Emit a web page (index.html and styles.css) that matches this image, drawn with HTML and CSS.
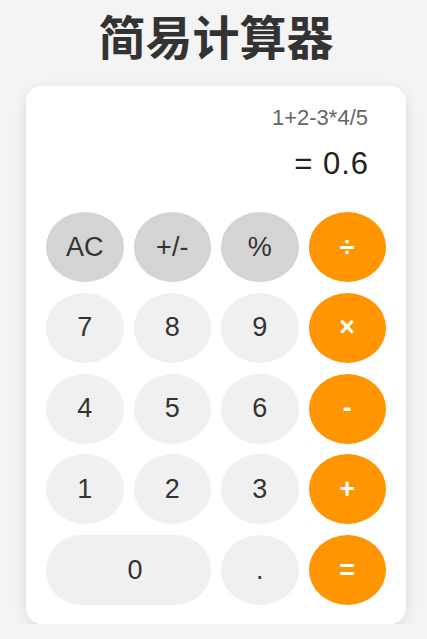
FILE: index.html
```html
<!DOCTYPE html>
<html lang="zh">
<head>
<meta charset="utf-8">
<title>简易计算器</title>
<link rel="stylesheet" href="styles.css">
</head>
<body>
<main class="app">
  <h1 class="title">简易计算器</h1>
  <section class="calc">
    <div class="display">
      <div class="expr">1+2-3*4/5</div>
      <div class="result">= 0.6</div>
    </div>
    <div class="keys">
      <button class="key fn">AC</button>
      <button class="key fn">+/-</button>
      <button class="key fn">%</button>
      <button class="key op">÷</button>
      <button class="key">7</button>
      <button class="key">8</button>
      <button class="key">9</button>
      <button class="key op">×</button>
      <button class="key">4</button>
      <button class="key">5</button>
      <button class="key">6</button>
      <button class="key op">-</button>
      <button class="key">1</button>
      <button class="key">2</button>
      <button class="key">3</button>
      <button class="key op">+</button>
      <button class="key zero">0</button>
      <button class="key">.</button>
      <button class="key op">=</button>
    </div>
  </section>
</main>
</body>
</html>
```

FILE: styles.css
```css
html, body {
  margin: 0;
  padding: 0;
}
body {
  background: #f4f4f4;
  font-family: "Liberation Sans", Arial, "Noto Sans CJK SC", sans-serif;
  color: #333;
}
.app {
  width: 380px;
  margin: 0 0 0 26px;
  display: flex;
  flex-direction: column;
}
.title {
  margin: 0;
  padding-top: 11px;
  height: 86px;
  box-sizing: border-box;
  font-family: "Noto Sans CJK SC", sans-serif;
  font-size: 47px;
  line-height: 47px;
  font-weight: 700;
  text-align: center;
  color: #333;
}
.calc {
  background: #fff;
  border-radius: 16px;
  box-shadow: 0 4px 14px rgba(0, 0, 0, 0.1);
  padding: 20px 20px 19px;
}
.display {
  text-align: right;
  padding: 0 18px 0 0;
  margin-bottom: 30px;
}
.expr {
  font-size: 22px;
  line-height: 24px;
  color: #666;
  margin-bottom: 16px;
}
.result {
  font-size: 31px;
  line-height: 36px;
  letter-spacing: 1px;
  margin-right: -1px;
  color: #222;
}
.keys {
  display: grid;
  grid-template-columns: repeat(4, 1fr);
  column-gap: 10px;
  row-gap: 10.75px;
}
.key {
  height: 70px;
  border: none;
  border-radius: 50%;
  background: #f0f0f0;
  color: #333;
  font-family: "Liberation Sans", Arial, sans-serif;
  font-size: 27px;
  padding: 0;
}
.key.fn {
  background: #d4d4d4;
}
.key.op {
  background: #ff9500;
  color: #fff;
  font-weight: 700;
}
.key.zero {
  grid-column: span 2;
  border-radius: 35px;
  padding-left: 13px;
}
```
